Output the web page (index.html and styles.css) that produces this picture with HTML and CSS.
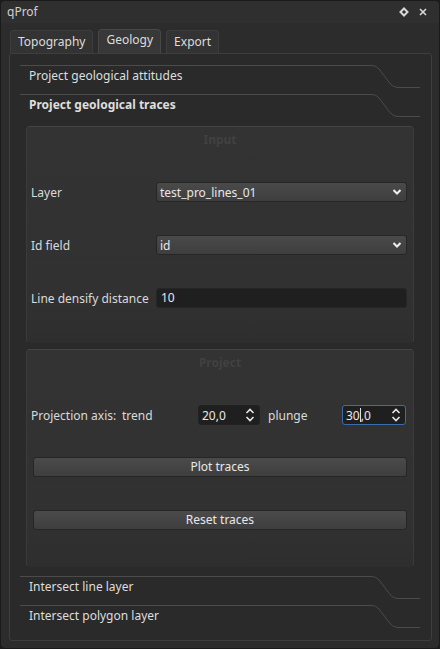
FILE: index.html
```html
<!DOCTYPE html>
<html>
<head>
<meta charset="utf-8">
<link rel="stylesheet" href="styles.css">
</head>
<body>
<div class="window">
  <div class="titlebar">
    <span class="title">qProf</span>
    <div class="title-btns">
      <svg width="10" height="10" viewBox="0 0 10 10"><path d="M5 1.5 L8.5 5 L5 8.5 L1.5 5 Z" fill="none" stroke="#d8d8d8" stroke-width="2"/></svg>
      <svg width="10" height="10" viewBox="0 0 10 10"><path d="M2 2 L8 8 M8 2 L2 8" stroke="#d8d8d8" stroke-width="1.6"/></svg>
    </div>
  </div>
  <div class="tabbar">
    <div class="tab">Topography</div>
    <div class="tab active">Geology</div>
    <div class="tab">Export</div>
  </div>
  <div class="pane">
    <div class="tb-header">
      <svg class="tb-line" width="400" height="29" viewBox="0 0 400 29"><path d="M0 0.5 H352 Q356 0.5 359 4 L370 18.5 Q373 22.5 378 22.5 H400" fill="none" stroke="#4b4b4b" stroke-width="1"/></svg>
      <span>Project geological attitudes</span>
    </div>
    <div class="tb-header bold">
      <svg class="tb-line" width="400" height="29" viewBox="0 0 400 29"><path d="M0 0.5 H352 Q356 0.5 359 4 L370 18.5 Q373 22.5 378 22.5 H400" fill="none" stroke="#4b4b4b" stroke-width="1"/></svg>
      <span>Project geological traces</span>
    </div>
    <div class="tb-page">
      <div class="group input-group">
        <div class="group-title">Input</div>
        <div class="form-row r1">
          <span class="label">Layer</span>
          <div class="combo"><span>test_pro_lines_01</span>
            <svg width="10" height="8" viewBox="0 0 10 8"><path d="M1.5 2 L5 5.5 L8.5 2" fill="none" stroke="#eeeeee" stroke-width="2"/></svg>
          </div>
        </div>
        <div class="form-row r2">
          <span class="label">Id field</span>
          <div class="combo"><span>id</span>
            <svg width="10" height="8" viewBox="0 0 10 8"><path d="M1.5 2 L5 5.5 L8.5 2" fill="none" stroke="#eeeeee" stroke-width="2"/></svg>
          </div>
        </div>
        <div class="form-row r3">
          <span class="label">Line densify distance</span>
          <div class="lineedit">10</div>
        </div>
      </div>
      <div class="group project-group">
        <div class="group-title">Project</div>
        <div class="proj-row">
          <span class="label l-axis">Projection axis:</span>
          <span class="label l-trend">trend</span>
          <div class="spin">
            <span>20,0</span>
            <svg width="10" height="16" viewBox="0 0 10 16"><path d="M1.5 6 L5 2.5 L8.5 6 M1.5 10 L5 13.5 L8.5 10" fill="none" stroke="#e6e6e6" stroke-width="1.6"/></svg>
          </div>
          <span class="label l-plunge">plunge</span>
          <div class="spin focus">
            <span>30<i class="caret"></i>,0</span>
            <svg width="10" height="16" viewBox="0 0 10 16"><path d="M1.5 6 L5 2.5 L8.5 6 M1.5 10 L5 13.5 L8.5 10" fill="none" stroke="#e6e6e6" stroke-width="1.6"/></svg>
          </div>
        </div>
        <div class="btn b1">Plot traces</div>
        <div class="btn b2">Reset traces</div>
      </div>
    </div>
    <div class="tb-header">
      <svg class="tb-line" width="400" height="29" viewBox="0 0 400 29"><path d="M0 0.5 H352 Q356 0.5 359 4 L370 18.5 Q373 22.5 378 22.5 H400" fill="none" stroke="#4b4b4b" stroke-width="1"/></svg>
      <span>Intersect line layer</span>
    </div>
    <div class="tb-header">
      <svg class="tb-line" width="400" height="29" viewBox="0 0 400 29"><path d="M0 0.5 H352 Q356 0.5 359 4 L370 18.5 Q373 22.5 378 22.5 H400" fill="none" stroke="#4b4b4b" stroke-width="1"/></svg>
      <span>Intersect polygon layer</span>
    </div>
  </div>
</div>
</body>
</html>
```

FILE: styles.css
```css
* { box-sizing: border-box; }
html, body {
  margin: 0;
  padding: 0;
  background: #1c1c1c;
}
body {
  font-family: "Noto Sans", "Open Sans", sans-serif;
  font-size: 12px;
  color: #dcdcdc;
}
.window {
  width: 440px;
  height: 649px;
  background: #2c2c2c;
  border: 1px solid #1a1a1a;
  border-radius: 5px;
  padding: 0 7px 0 8px;
  display: flex;
  flex-direction: column;
  overflow: hidden;
}
.titlebar {
  height: 22px;
  display: flex;
  align-items: center;
  justify-content: space-between;
  margin: 0 -7px 0 -8px;
  padding: 0 7px 0 6px;
  background: #2f2f2f;
}
.title {
  color: #cfcfcf;
  line-height: 22px;
}
.title-btns {
  display: flex;
  gap: 9px;
  align-items: center;
  padding-right: 4px;
}
.title-btns svg { display: block; }
.tabbar {
  display: flex;
  align-items: flex-end;
  gap: 5px;
  height: 30px;
  padding-left: 1px;
  margin-top: 0;
}
.tab {
  height: 23px;
  padding: 0 7px;
  line-height: 22px;
  background: #333333;
  border: 1px solid #3d3d3d;
  border-bottom: none;
  border-radius: 4px 4px 0 0;
  color: #dddddd;
}
.tab.active {
  height: 24px;
  line-height: 20px;
  background: #383838;
  border-color: #474747;
  padding: 0 7px 0 7px;
}
.pane {
  height: 588px;
  border: 1px solid #3e3e3e;
  border-radius: 3px;
  background: #2a2a2a;
  padding: 11px 10px 0 10px;
}
.tb-header {
  position: relative;
  height: 29px;
  padding-left: 9px;
  line-height: 21px;
  color: #dedede;
}
.tb-header.bold { font-weight: bold; }
.tb-header span { position: relative; }
.tb-line {
  position: absolute;
  left: 0;
  top: 0;
}
.tb-page {
  height: 453px;
  padding: 3px 7px 0 6px;
  display: flex;
  flex-direction: column;
  gap: 6px;
}
.group {
  position: relative;
  border: 1px solid #3b3b3b;
  border-top-color: #444444;
  border-bottom-color: #2e2e2e;
  border-radius: 4px;
  background: linear-gradient(#333333, #313131 80%, #2e2e2e);
}
.input-group { height: 217px; }
.project-group { height: 218px; }
.group-title {
  text-align: center;
  font-weight: bold;
  color: #414141;
  height: 26px;
  line-height: 26px;
}
.form-row {
  display: flex;
  align-items: center;
  padding: 0 6px 0 4px;
  height: 20px;
}
.r1 { margin-top: 29px; }
.r2 { margin-top: 33px; }
.r3 { margin-top: 33px; }
.label { color: #dadada; white-space: nowrap; }
.form-row .label { width: 125px; }
.combo {
  flex: 1;
  height: 20px;
  border: 1px solid #262626;
  border-radius: 3px;
  background: linear-gradient(#4a4a4a, #3e3e3e);
  display: flex;
  align-items: center;
  justify-content: space-between;
  padding: 0 4px 0 3px;
  color: #e8e8e8;
}
.combo svg { display: block; }
.lineedit {
  flex: 1;
  height: 20px;
  border: 1px solid #262626;
  border-radius: 3px;
  background: #1f1f1f;
  padding: 0 4px;
  line-height: 18px;
  color: #e8e8e8;
}
.proj-row {
  display: flex;
  align-items: center;
  height: 20px;
  margin-top: 29px;
  padding-left: 4px;
}
.l-axis { width: 91px; }
.l-trend { width: 76px; }
.l-plunge { width: 74px; margin-left: 8px; }
.spin {
  width: 62px;
  height: 20px;
  border: 1px solid #222222;
  border-radius: 3px;
  background: #1f1f1f;
  display: flex;
  align-items: center;
  justify-content: space-between;
  padding: 0 4px 0 3px;
  color: #e8e8e8;
}
.spin.focus {
  width: 64px;
  border-color: #3b6ea8;
}
.spin svg { display: block; }
.caret {
  display: inline-block;
  width: 1px;
  height: 14px;
  background: #e0e0e0;
  vertical-align: -2px;
}
.btn {
  height: 20px;
  margin: 0 6px 0 6px;
  border: 1px solid #262626;
  border-radius: 3px;
  background: linear-gradient(#4b4b4b, #3e3e3e);
  text-align: center;
  line-height: 18px;
  color: #e8e8e8;
}
.b1 { margin-top: 32px; }
.b2 { margin-top: 33px; }
```
